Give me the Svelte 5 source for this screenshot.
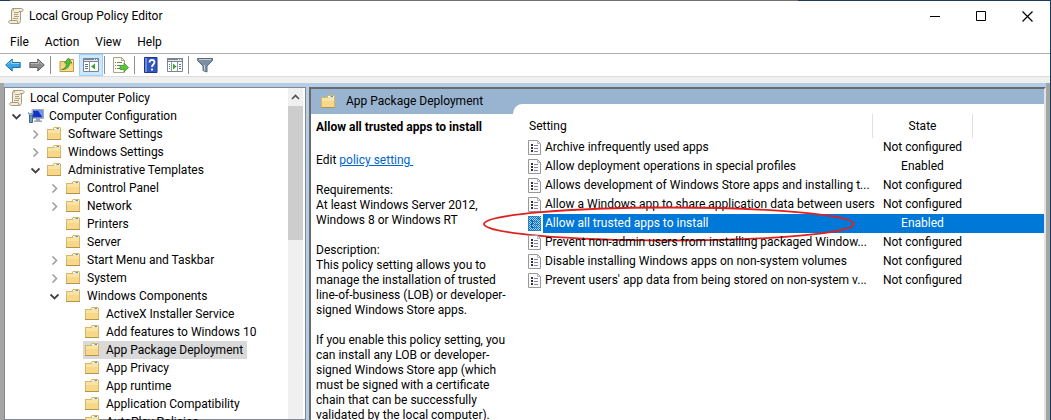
<script lang="ts">
    type TreeItem = { name: string; level: number; state?: "open" | "closed"; icon?: string };

    const menus = ["File", "Action", "View", "Help"];

    const tree: TreeItem[] = [
        { name: "Local Computer Policy", level: 0, icon: "scroll" },
        { name: "Computer Configuration", level: 1, state: "open", icon: "computer" },
        { name: "Software Settings", level: 2, state: "closed" },
        { name: "Windows Settings", level: 2, state: "closed" },
        { name: "Administrative Templates", level: 2, state: "open" },
        { name: "Control Panel", level: 3, state: "closed" },
        { name: "Network", level: 3, state: "closed" },
        { name: "Printers", level: 3 },
        { name: "Server", level: 3 },
        { name: "Start Menu and Taskbar", level: 3, state: "closed" },
        { name: "System", level: 3, state: "closed" },
        { name: "Windows Components", level: 3, state: "open" },
        { name: "ActiveX Installer Service", level: 4 },
        { name: "Add features to Windows 10", level: 4 },
        { name: "App Package Deployment", level: 4 },
        { name: "App Privacy", level: 4 },
        { name: "App runtime", level: 4 },
        { name: "Application Compatibility", level: 4 },
        { name: "AutoPlay Policies", level: 4 },
    ];

    const settings = [
        { name: "Archive infrequently used apps", state: "Not configured" },
        { name: "Allow deployment operations in special profiles", state: "Enabled" },
        { name: "Allows development of Windows Store apps and installing t...", state: "Not configured" },
        { name: "Allow a Windows app to share application data between users", state: "Not configured" },
        { name: "Allow all trusted apps to install", state: "Enabled" },
        { name: "Prevent non-admin users from installing packaged Window...", state: "Not configured" },
        { name: "Disable installing Windows apps on non-system volumes", state: "Not configured" },
        { name: "Prevent users' app data from being stored on non-system v...", state: "Not configured" },
    ];

    const requirements = "At least Windows Server 2012,\nWindows 8 or Windows RT";
    const description = [
        "This policy setting allows you to\nmanage the installation of trusted\nline-of-business (LOB) or developer-\nsigned Windows Store apps.",
        "If you enable this policy setting, you\ncan install any LOB or developer-\nsigned Windows Store app (which\nmust be signed with a certificate\nchain that can be successfully\nvalidated by the local computer).",
    ];

    let folder = $state("App Package Deployment");
    let selected = $state(4);
</script>

{#snippet folderIcon()}
    <svg width="16" height="16" viewBox="0 0 16 16" aria-hidden="true">
        <path d="M0 3h5.500L7 1h6l1 1v12H0z" fill="#d9b568" />
        <path d="M7 2h6v1H7z" fill="#fff" />
        <path d="M9.500 2H12v1H9.500z" fill="#3f97e4" />
        <path d="M1 4h5.500l1-1H13v5H1z" fill="#fbe3a2" />
        <path d="M1 7h12v6H1z" fill="#f7d88b" />
        <path d="M0 13h14v1H0z" fill="#b8944a" />
    </svg>
{/snippet}

{#snippet scrollIcon()}
    <svg width="16" height="16" viewBox="0 0 16 16" aria-hidden="true">
        <path d="M4.500.5h9c2 0 2 3 .3 3H12.500v9c0 2-1 3-2 3h-8c-2 0-2.500-3-.5-3h1.500v-10z" fill="#f5edd4" stroke="#a39b83" />
        <path d="M4.500.5c1.300 0 1.500 2.500 0 2.500M11 3.500h2.500M2 12.500h7c1 0 .5 3 1.500 3" fill="none" stroke="#a39b83" />
        <path d="M6 4.500h5M6 6.500h4M6 8.500h5M5 10.500h5" stroke="#aaa38c" />
    </svg>
{/snippet}

{#snippet computerIcon()}
    <svg width="16" height="16" viewBox="0 0 16 16" aria-hidden="true">
        <path d="M4 1.500h11.500v9H4z" fill="#c9d2da" stroke="#a3adb8" />
        <path d="M5 2.500h9.500v7H5z" fill="#1233c4" />
        <path d="M10 2.500h4.500v7z" fill="#6d9bf0" />
        <path d="M8 11h4v1.500h2V14H6v-1.500h2z" fill="#98a5b2" />
        <path d="M1.500 7h3v7.500h-3z" fill="#6f9cc6" stroke="#46698a" />
        <path d="M0 4.500l1.500 2.500h3L5.500 4.500 4 5.500H2z" fill="#a9c3da" stroke="#5b7c9b" stroke-width=".6" />
    </svg>
{/snippet}

{#snippet panelIcon(flip: boolean)}
    <svg width="16" height="14" viewBox="0 0 16 14" aria-hidden="true">
        <path d="M.5.5h15v13H.5z" fill="#fff" stroke="#7a8594" />
        <path d="M0 0h16v4H0z" fill="#7a8594" />
        <path d="M1 2.500h14" stroke="#dfe5eb" />
        <path d="M11 1h1v1h-1zM13 1h1v1h-1z" fill="#fff" />
        {#if flip}
            <path d="M4.500 4v9M10.500 4v9" stroke="#8f99a6" />
            <path d="M12 6.500h2M12 8.500h2M12 10.500h2M2 6.500h1M2 8.500h1M2 10.500h1" stroke="#66758a" />
            <path d="M6 5.500v6L9.500 8.500z" fill="#35a829" />
        {:else}
            <path d="M6.500 4v9" stroke="#8f99a6" />
            <path d="M2 6.500h3M2 8.500h3M2 10.500h3" stroke="#66758a" />
            <path d="M12 5.500v6L8 8.500z" fill="#35a829" />
        {/if}
    </svg>
{/snippet}

<div class="window">
    <header class="title">
        {@render scrollIcon()}
        <h1>Local Group Policy Editor</h1>
        <div class="controls">
            <button aria-label="Minimize">
                <svg width="11" height="11" viewBox="0 0 11 11"><path d="M0 5.500h10" stroke="#000" /></svg>
            </button>
            <button aria-label="Maximize">
                <svg width="11" height="11" viewBox="0 0 11 11"><path d="M.5.5h9v9h-9z" fill="none" stroke="#000" /></svg>
            </button>
            <button aria-label="Close">
                <svg width="11" height="11" viewBox="0 0 11 11"><path d="M.5.5l10 10M10.500.5l-10 10" stroke="#000" stroke-width="1.200" /></svg>
            </button>
        </div>
    </header>

    <nav class="menu">
        {#each menus as menu}
            <button>{menu}</button>
        {/each}
    </nav>

    <div class="toolbar">
        <button aria-label="Back">
            <svg width="16" height="14" viewBox="0 0 16 14">
                <path d="M.7 7l6.500-6v3.500h8v5h-8V13z" fill="#35a5e6" stroke="#1b6fae" />
                <path d="M2.500 6.500l4-3.500v2.500h8" fill="none" stroke="#8fd3f7" />
            </svg>
        </button>
        <button aria-label="Forward">
            <svg width="16" height="14" viewBox="0 0 16 14">
                <path d="M15.300 7l-6.500-6v3.500h-8v5h8V13z" fill="#8c8c8c" stroke="#5f5f5f" />
                <path d="M13.500 6.500l-4-3.500v2.500h-8" fill="none" stroke="#b8b8b8" />
            </svg>
        </button>
        <span class="separator"></span>
        <button aria-label="Up one level">
            <svg width="16" height="16" viewBox="0 0 16 16">
                <path d="M1 4.500h6l1-2h6.500v12H1z" fill="#f3d486" stroke="#c49a45" />
                <path d="M9 3.500h5v2H9z" fill="#fdf5da" />
                <path d="M2 9h12v5H2z" fill="#f7dc92" />
                <path d="M2.500 12.500C6.500 11.500 7.500 9 7.500 6h-2L9.500 1l3.500 5h-2.500c0 4-3 7-8 6.500z" fill="#56bd36" stroke="#31871e" stroke-width=".7" />
            </svg>
        </button>
        <button class="active" aria-label="Show console tree">{@render panelIcon(false)}</button>
        <span class="separator"></span>
        <button aria-label="Export list">
            <svg width="16" height="16" viewBox="0 0 16 16">
                <path d="M.5.5h8l3 3v12H.5z" fill="#fffdf0" stroke="#a8a48e" />
                <path d="M8.500.5v3h3" fill="none" stroke="#a8a48e" />
                <path d="M2 5.500h1M2 8.500h1M2 11.500h1M4 5.500h5M4 8.500h3M4 11.500h3" stroke="#747b88" />
                <path d="M7 8.500h4V6l4.500 4.500L11 15v-2.500H7z" fill="#5bc53c" stroke="#37921f" stroke-width=".7" />
            </svg>
        </button>
        <span class="separator"></span>
        <button aria-label="Help">
            <svg width="14" height="16" viewBox="0 0 14 16">
                <path d="M.5.5h12.500v15H.5z" fill="#3156bf" stroke="#1c358d" />
                <path d="M1 1h2v14H1z" fill="#6f8edb" />
                <path d="M5.500 5.500c0-3.500 5-3.200 5-.4C10.500 7.500 8 7.500 8 10M8 11.500v2" fill="none" stroke="#fff" stroke-width="1.800" />
            </svg>
        </button>
        <button aria-label="Show action pane">{@render panelIcon(true)}</button>
        <span class="separator"></span>
        <button aria-label="Filter">
            <svg width="16" height="15" viewBox="0 0 16 15">
                <path d="M.5.5h15v2L10 8v6l-4-1.500V8L.5 2.500z" fill="#7d90a3" stroke="#5a6b7c" />
                <path d="M2 1.500h12" stroke="#c4d0db" />
                <path d="M7.500 7v5.500" stroke="#c4d0db" />
            </svg>
        </button>
    </div>

    <main>
        <section class="tree">
            <ul>
                {#each tree as item}
                    <li class="level-{item.level}">
                        <span class="chevron">
                            {#if item.state === "open"}
                                <svg width="9" height="9" viewBox="0 0 9 9"><path d="M.5 2.500l4 4 4-4" fill="none" stroke="#404040" stroke-width="1.800" /></svg>
                            {:else if item.state === "closed"}
                                <svg width="9" height="9" viewBox="0 0 9 9"><path d="M2.500.5l4 4-4 4" fill="none" stroke="#a0a0a0" stroke-width="1.600" /></svg>
                            {/if}
                        </span>
                        <button class:current={folder === item.name} onclick={() => (folder = item.name)}>
                            {#if item.icon === "scroll"}
                                {@render scrollIcon()}
                            {:else if item.icon === "computer"}
                                {@render computerIcon()}
                            {:else}
                                {@render folderIcon()}
                            {/if}
                            <span>{item.name}</span>
                        </button>
                    </li>
                {/each}
            </ul>
            <div class="scrollbar">
                <button aria-label="Scroll up">
                    <svg width="9" height="9" viewBox="0 0 9 9"><path d="M1 6l3.500-3.500L8 6" fill="none" stroke="#505050" stroke-width="1.600" /></svg>
                </button>
                <div class="thumb"></div>
            </div>
        </section>

        <section class="content">
            <div class="details">
                <div class="heading">
                    {@render folderIcon()}
                    <h2>{folder}</h2>
                </div>
                <div class="text">
                    <h3>{settings[selected].name}</h3>
                    <p>Edit <a href="#policy">policy setting&nbsp;</a></p>
                    <p>Requirements:<br />{requirements}</p>
                    <p>Description:<br />{description[0]}</p>
                    <p>{description[1]}</p>
                </div>
            </div>

            <div class="list">
                <table>
                    <thead>
                        <tr>
                            <th class="name">Setting</th>
                            <th class="state">State</th>
                            <th></th>
                        </tr>
                    </thead>
                    <tbody>
                        {#each settings as setting, i}
                            <tr class:selected={selected === i} onclick={() => (selected = i)}>
                                <td>
                                    <div class="cell">
                                        <svg width="13" height="15" viewBox="0 0 13 15" aria-hidden="true">
                                            <path d="M.5.5h9l3 3v11H.5z" fill="#fafafa" stroke="#999" />
                                            <path d="M9.500.5v3h3" fill="none" stroke="#b5b5b5" />
                                            <path d="M3 4h2v2H3zM3 7h2v2H3zM3 10h2v2H3z" fill="#333" />
                                            <path d="M6 5.500h4M6 8.500h4M6 11.500h4" stroke="#8a7fa8" />
                                            {#if selected === i}
                                                <defs>
                                                    <pattern id="dither" width="2" height="2" patternUnits="userSpaceOnUse">
                                                        <path d="M0 0h1v1H0zM1 1h1v1H1z" fill="#0078d7" />
                                                    </pattern>
                                                </defs>
                                                <path d="M0 0h13v15H0z" fill="#0078d7" opacity=".3" />
                                                <path d="M0 0h13v15H0z" fill="url(#dither)" shape-rendering="crispEdges" />
                                            {/if}
                                        </svg>
                                        <span>{setting.name}</span>
                                        {#if i === 4}
                                            <svg class="marker" width="372" height="36" viewBox="0 0 372 36" aria-hidden="true">
                                                <ellipse cx="186" cy="18" rx="185" ry="16.500" fill="none" stroke="#e02020" stroke-width="1.800" />
                                            </svg>
                                        {/if}
                                    </div>
                                </td>
                                <td class="state">{setting.state}</td>
                                <td></td>
                            </tr>
                        {/each}
                    </tbody>
                </table>
            </div>
        </section>
    </main>
</div>

<style>
    :global(body) {
        margin: 0;
    }

    .window {
        display: flex;
        flex-direction: column;
        height: 100vh;
        box-sizing: border-box;
        overflow: hidden;
        padding-top: 1px;
        border-right: 1px solid #173a5e;
        background: #f0f0f0 linear-gradient(to right, #173a5e 1%, #707070 1% 76%, #173a5e 76%) top / 100% 1px no-repeat;
        color: #000;
        font: 12px/15px Roboto, "Open Sans", sans-serif;
    }

    h1, h2, h3, p, ul {
        margin: 0;
        padding: 0;
        font-size: 12px;
        font-weight: 400;
    }

    button {
        display: flex;
        align-items: center;
        justify-content: center;
        padding: 0;
        border: 0;
        background: none;
        color: inherit;
        font: inherit;
    }

    svg {
        display: block;
        flex: none;
    }

    .title {
        display: flex;
        align-items: center;
        flex: none;
        gap: 5px;
        height: 30px;
        padding-left: 8px;
        background: #fff;
    }

    .controls {
        display: flex;
        margin-left: auto;
    }

    .controls button {
        width: 46px;
        height: 28px;
    }

    .menu {
        display: flex;
        flex: none;
        gap: 16px;
        height: 22px;
        padding-left: 10px;
        border-bottom: 1px solid #a9adb1;
        background: #fff;
    }

    .toolbar {
        display: flex;
        align-items: center;
        flex: none;
        height: 22px;
        padding-left: 1px;
        border-bottom: 1px solid #dcdcdc;
        background: #fff;
    }

    .toolbar button {
        width: 24px;
        height: 22px;
        box-sizing: border-box;
    }

    .toolbar .active {
        border: 1px solid #99d1ff;
        background: #cce8ff;
    }

    .separator {
        width: 1px;
        height: 18px;
        margin: 0 4px 0 1px;
        background: #8d8d8d;
    }

    main {
        display: flex;
        flex: 1;
        min-height: 0;
        margin-top: 6px;
        padding-top: 4px;
        border: solid #a5a5a5;
        border-width: 0 4px;
        background: #b4cde6;
    }

    .tree {
        display: flex;
        flex: none;
        width: 300px;
        border: 1px solid #828790;
        background: #fff;
    }

    ul {
        flex: 1;
        padding-top: 1px;
        list-style: none;
    }

    li {
        display: flex;
        height: 18px;
    }

    .level-1 {
        padding-left: 4px;
    }

    .level-2 {
        padding-left: 23px;
    }

    .level-3 {
        padding-left: 42px;
    }

    .level-4 {
        padding-left: 61px;
    }

    .chevron {
        display: flex;
        align-items: center;
        width: 17px;
        padding-left: 3px;
        box-sizing: border-box;
    }

    .level-0 .chevron {
        width: 2px;
        padding: 0;
    }

    li button {
        gap: 5px;
        padding: 0 4px 0 2px;
        white-space: nowrap;
    }

    .current {
        background: #d9d9d9;
    }

    .scrollbar {
        width: 15px;
        margin-right: 2px;
        padding-top: 1px;
        background: #f0f0f0;
    }

    .scrollbar button {
        width: 15px;
        height: 17px;
    }

    .thumb {
        height: 134px;
        background: #cdcdcd;
    }

    .content {
        display: flex;
        flex: 1;
        min-width: 0;
        margin-left: 3px;
        border: solid #696969;
        border-width: 2px 0 0 2px;
        border-right: 2px solid #e3e3e3;
        background: #99b4d1;
    }

    .details {
        flex: none;
        width: 202px;
    }

    .heading {
        display: flex;
        align-items: center;
        gap: 9px;
        height: 25px;
        padding-left: 10px;
    }

    .text {
        height: 100%;
        padding: 6px 0 0 5px;
        background: #fff;
    }

    h3 {
        padding-bottom: 18px;
        font-weight: 700;
        white-space: nowrap;
    }

    p {
        padding-bottom: 15px;
        white-space: pre;
    }

    a {
        color: #0066cc;
    }

    .list {
        flex: 1;
        min-width: 0;
        margin-top: 15px;
        border-top-left-radius: 9px 10px;
        background: #fff;
    }

    table {
        width: 100%;
        margin-top: 10px;
        border-collapse: collapse;
        table-layout: fixed;
    }

    th, td {
        padding: 0;
        font-weight: 400;
        text-align: left;
        white-space: nowrap;
    }

    th {
        height: 24px;
        border-right: 1px solid #e0e0e0;
    }

    th:last-child {
        border-right: 0;
    }

    th.name {
        width: 343px;
        padding-left: 16px;
    }

    th.state {
        width: 99px;
    }

    .state {
        text-align: center;
    }

    td {
        height: 19px;
    }

    .cell {
        position: relative;
        display: flex;
        align-items: center;
        gap: 2px;
        height: 19px;
        padding-left: 15px;
    }

    .cell span {
        flex: 1;
        padding-left: 2px;
        line-height: 19px;
    }

    .selected {
        color: #fff;
    }

    .selected span,
    .selected td + td {
        background: #0078d7;
    }

    .marker {
        position: absolute;
        top: -8px;
        left: -30px;
    }
</style>
